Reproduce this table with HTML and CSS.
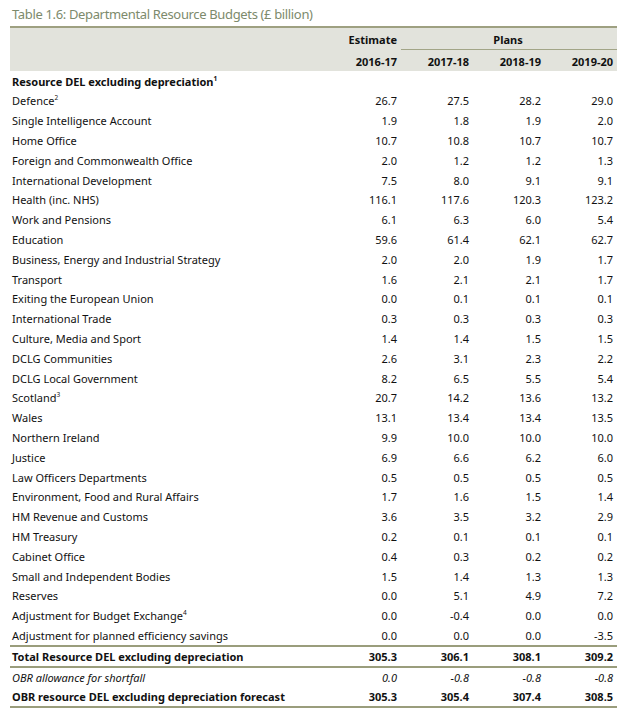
FILE: index.html
```html
<!DOCTYPE html>
<html lang="en">
<head>
<meta charset="utf-8">
<title>Table 1.6</title>
<link rel="stylesheet" href="styles.css">
</head>
<body>
<div class="page">
  <div class="title">Table 1.6: Departmental Resource Budgets (£ billion)</div>
  <table class="budget">
    <colgroup>
      <col class="c-label"><col class="c-num"><col class="c-num"><col class="c-num"><col class="c-num">
    </colgroup>
    <thead>
      <tr class="h1">
        <th></th>
        <th class="num">Estimate</th>
        <th class="plans" colspan="3">Plans</th>
      </tr>
      <tr class="h2">
        <th></th>
        <th class="num">2016-17</th>
        <th class="num">2017-18</th>
        <th class="num">2018-19</th>
        <th class="num">2019-20</th>
      </tr>
    </thead>
    <tbody>
      <tr class="section"><td colspan="5">Resource DEL excluding depreciation<sup>1</sup></td></tr>
      <tr><td>Defence<sup>2</sup></td><td>26.7</td><td>27.5</td><td>28.2</td><td>29.0</td></tr>
      <tr><td>Single Intelligence Account</td><td>1.9</td><td>1.8</td><td>1.9</td><td>2.0</td></tr>
      <tr><td>Home Office</td><td>10.7</td><td>10.8</td><td>10.7</td><td>10.7</td></tr>
      <tr><td>Foreign and Commonwealth Office</td><td>2.0</td><td>1.2</td><td>1.2</td><td>1.3</td></tr>
      <tr><td>International Development</td><td>7.5</td><td>8.0</td><td>9.1</td><td>9.1</td></tr>
      <tr><td>Health (inc. NHS)</td><td>116.1</td><td>117.6</td><td>120.3</td><td>123.2</td></tr>
      <tr><td>Work and Pensions</td><td>6.1</td><td>6.3</td><td>6.0</td><td>5.4</td></tr>
      <tr><td>Education</td><td>59.6</td><td>61.4</td><td>62.1</td><td>62.7</td></tr>
      <tr><td>Business, Energy and Industrial Strategy</td><td>2.0</td><td>2.0</td><td>1.9</td><td>1.7</td></tr>
      <tr><td>Transport</td><td>1.6</td><td>2.1</td><td>2.1</td><td>1.7</td></tr>
      <tr><td>Exiting the European Union</td><td>0.0</td><td>0.1</td><td>0.1</td><td>0.1</td></tr>
      <tr><td>International Trade</td><td>0.3</td><td>0.3</td><td>0.3</td><td>0.3</td></tr>
      <tr><td>Culture, Media and Sport</td><td>1.4</td><td>1.4</td><td>1.5</td><td>1.5</td></tr>
      <tr><td>DCLG Communities</td><td>2.6</td><td>3.1</td><td>2.3</td><td>2.2</td></tr>
      <tr><td>DCLG Local Government</td><td>8.2</td><td>6.5</td><td>5.5</td><td>5.4</td></tr>
      <tr><td>Scotland<sup>3</sup></td><td>20.7</td><td>14.2</td><td>13.6</td><td>13.2</td></tr>
      <tr><td>Wales</td><td>13.1</td><td>13.4</td><td>13.4</td><td>13.5</td></tr>
      <tr><td>Northern Ireland</td><td>9.9</td><td>10.0</td><td>10.0</td><td>10.0</td></tr>
      <tr><td>Justice</td><td>6.9</td><td>6.6</td><td>6.2</td><td>6.0</td></tr>
      <tr><td>Law Officers Departments</td><td>0.5</td><td>0.5</td><td>0.5</td><td>0.5</td></tr>
      <tr><td>Environment, Food and Rural Affairs</td><td>1.7</td><td>1.6</td><td>1.5</td><td>1.4</td></tr>
      <tr><td>HM Revenue and Customs</td><td>3.6</td><td>3.5</td><td>3.2</td><td>2.9</td></tr>
      <tr><td>HM Treasury</td><td>0.2</td><td>0.1</td><td>0.1</td><td>0.1</td></tr>
      <tr><td>Cabinet Office</td><td>0.4</td><td>0.3</td><td>0.2</td><td>0.2</td></tr>
      <tr><td>Small and Independent Bodies</td><td>1.5</td><td>1.4</td><td>1.3</td><td>1.3</td></tr>
      <tr><td>Reserves</td><td>0.0</td><td>5.1</td><td>4.9</td><td>7.2</td></tr>
      <tr><td>Adjustment for Budget Exchange<sup>4</sup></td><td>0.0</td><td>-0.4</td><td>0.0</td><td>0.0</td></tr>
      <tr><td>Adjustment for planned efficiency savings</td><td>0.0</td><td>0.0</td><td>0.0</td><td>-3.5</td></tr>
      <tr class="total"><td>Total Resource DEL excluding depreciation</td><td>305.3</td><td>306.1</td><td>308.1</td><td>309.2</td></tr>
      <tr class="allow"><td>OBR allowance for shortfall</td><td>0.0</td><td>-0.8</td><td>-0.8</td><td>-0.8</td></tr>
      <tr class="forecast"><td>OBR resource DEL excluding depreciation forecast</td><td>305.3</td><td>305.4</td><td>307.4</td><td>308.5</td></tr>
    </tbody>
  </table>
  <p class="foot">Machinery of Government changes are included in these figures, which will be reflected in departmental totals.</p>
</div>
</body>
</html>
```

FILE: styles.css
```css
html, body {
  margin: 0;
  padding: 0;
  background: #ffffff;
}
.page {
  padding: 0 11px 0 10px;
  font-family: "Noto Sans", "Open Sans", sans-serif;
  font-size: 11px;
  color: #111111;
}
.title {
  font-size: 13px;
  letter-spacing: -0.35px;
  line-height: 20px;
  height: 20px;
  padding: 4px 0 2px 2px;
  color: #7d8a6c;
  border-bottom: 2px solid #9ea081;
}
.budget {
  width: 607px;
  border-collapse: collapse;
  table-layout: fixed;
}
.c-label { width: 319px; }
.c-num { width: 72px; }
.budget thead tr {
  background: #e2e3dc;
}
.budget th {
  font-weight: bold;
  height: 21px;
  padding: 2px 4px 0 0;
  line-height: 19px;
  box-sizing: border-box;
}
.budget th.num { text-align: right; }
.budget th.plans {
  text-align: center;
  padding-left: 2px;
}
.budget tr.h1 th.plans {
  border-bottom: 1px solid #a2a587;
}
.budget tr.h1 th { height: 20px; }
.budget td {
  height: 19.8px;
  padding: 0 4px 0 0;
  line-height: 19px;
  text-align: right;
  white-space: nowrap;
}
.budget td:first-child {
  text-align: left;
  padding-left: 2px;
}
.budget tr.section td {
  font-weight: bold;
  height: 20px;
}
sup {
  font-size: 6.5px;
  vertical-align: top;
  line-height: 10px;
  position: relative;
  top: 2px;
}
.budget tr.total td {
  font-weight: bold;
  height: 16px;
  border-top: 2px solid #9a9d7c;
  border-bottom: 2px solid #9a9d7c;
}
.budget tr.allow td {
  font-style: italic;
  height: 18px;
}
.budget tr.forecast td {
  font-weight: bold;
  height: 19px;
  border-bottom: 2px solid #9a9d7c;
}
.foot {
  margin: 1px 0 0 2px;
  font-size: 10px;
  line-height: 14px;
  white-space: nowrap;
  overflow: hidden;
}
```
